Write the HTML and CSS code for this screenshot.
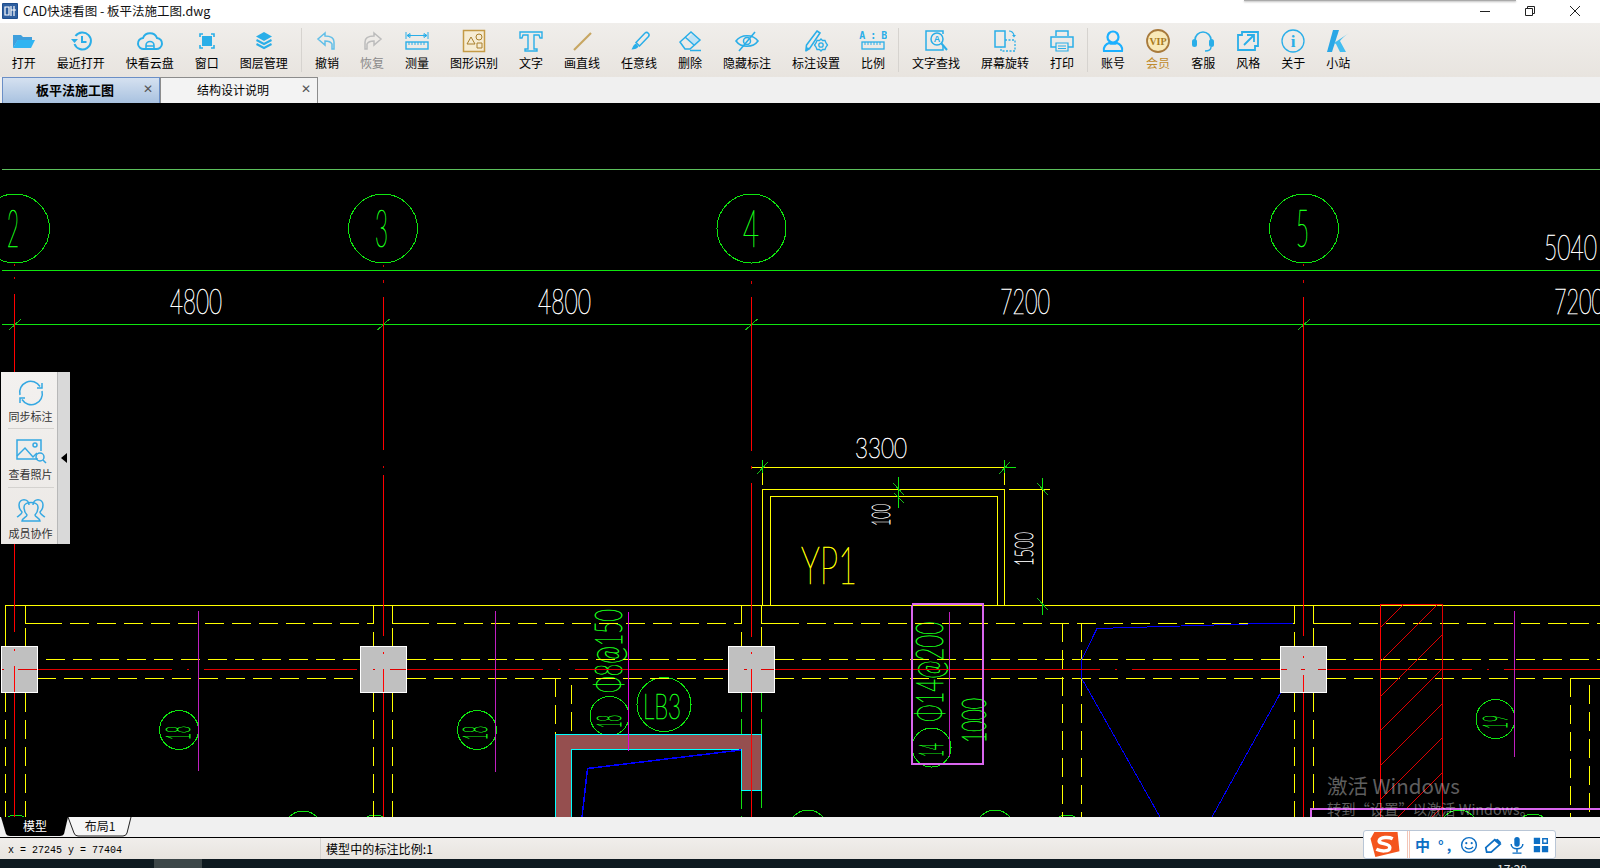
FILE: index.html
```html
<!DOCTYPE html>
<html lang="zh-CN">
<head>
<meta charset="utf-8">
<title>CAD快速看图 - 板平法施工图.dwg</title>
<link rel="stylesheet" href="styles.css">
</head>
<body>
<div class="app">
  <header class="titlebar">
    <svg class="app-icon" viewBox="0 0 16 16"><rect width="16" height="16" rx="1" fill="#1f4f8f"/><rect x="1" y="1" width="14" height="14" fill="#2f5f9f"/><path d="M3 4h4v8H3zM9 3v10M12 3v10M9 7h5" fill="none" stroke="#fff" stroke-width="1.2"/></svg>
    <span class="title">CAD快速看图 - 板平法施工图.dwg</span>
    <div class="win-shadow"></div>
    <div class="win-btns">
      <svg class="win-btn" viewBox="0 0 12 12"><path d="M1 6.500h10" stroke="#222" fill="none"/></svg>
      <svg class="win-btn" viewBox="0 0 12 12"><path d="M1.500 3.500h7v7h-7zM3.500 3.500v-2h7v7h-2" stroke="#222" fill="none"/></svg>
      <svg class="win-btn" viewBox="0 0 12 12"><path d="M1 1l10 10M11 1L1 11" stroke="#222" fill="none"/></svg>
    </div>
  </header>

  <nav class="toolbar">
    <div class="tool"><svg class="ico" viewBox="0 0 28 28"><path d="M3 21V8h8l2 2h9v3H8z" fill="#3f9fdc"/><path d="M7.500 13H25l-4 8H3z" fill="#2fb4f2"/></svg><span>打开</span></div>
    <div class="tool"><svg class="ico line" viewBox="0 0 28 28"><path d="M8.500 9a8.500 8.500 0 1 1-1 8" stroke-width="2"/><path d="M4 12h7l-3.500 4z" class="solid"/><path d="M15 9v6h4.500" stroke-width="2"/></svg><span>最近打开</span></div>
    <div class="tool"><svg class="ico line" viewBox="0 0 28 28"><path d="M8 22a5.500 5.500 0 0 1-1-11A7.500 7.500 0 0 1 21 11a5.500 5.500 0 0 1-1 11z" stroke-width="2"/><path d="M10 22v-3.500a4 4 0 0 1 8 0V22M10 19h8" stroke-width="1.600"/></svg><span>快看云盘</span></div>
    <div class="tool"><svg class="ico line" viewBox="0 0 28 28"><rect x="9" y="9" width="10" height="10" class="solid"/><path d="M7 10V7h3M18 7h3v3M21 18v3h-3M10 21H7v-3" stroke-width="1.600"/></svg><span>窗口</span></div>
    <div class="tool"><svg class="ico line" viewBox="0 0 28 28"><path d="M14 5l8 4.500-8 4.500-8-4.500z" class="solid"/><path d="M6.500 13l7.500 4 7.500-4M6.500 17l7.500 4 7.500-4" stroke-width="2"/></svg><span>图层管理</span></div>
    <div class="sep"></div>
    <div class="tool"><svg class="ico line pale" viewBox="0 0 28 28"><path d="M12 6l-7 6 7 6v-4c4 0 6 1 7 3v5h2v-7c0-4-4-6-9-6z" stroke-width="1.500"/></svg><span>撤销</span></div>
    <div class="tool"><svg class="ico line grey" viewBox="0 0 28 28"><path d="M16 6l7 6-7 6v-4c-4 0-6 1-7 3v5H7v-7c0-4 4-6 9-6z" stroke-width="1.500"/></svg><span class="off">恢复</span></div>
    <div class="tool"><svg class="ico line" viewBox="0 0 28 28"><path d="M3 5v7M25 5v7M4 8.500h20M4 8.500l3-2v4zM24 8.500l-3-2v4z" stroke-width="1"/><rect x="3" y="15" width="22" height="7" stroke-width="1.400"/><path d="M6 15v3M9 15v3M12 15v3M15 15v3M18 15v3M21 15v3" stroke-width="1"/></svg><span>测量</span></div>
    <div class="tool"><svg class="ico gold" viewBox="0 0 28 28"><rect x="3.500" y="3.500" width="21" height="21" fill="#f6ecd3" stroke="#c49a46" stroke-width="1.500"/><path d="M11 10l4 7H7zM17 16h5v5h-5z" fill="none" stroke="#a87f2c"/><circle cx="19" cy="10" r="3" fill="none" stroke="#a87f2c"/></svg><span>图形识别</span></div>
    <div class="tool"><svg class="ico line" viewBox="0 0 28 28"><path d="M3 5h22v6h-2l-1-3h-5v14h3v2H8v-2h3V8H6l-1 3H3z" stroke-width="1.400"/></svg><span>文字</span></div>
    <div class="tool"><svg class="ico" viewBox="0 0 28 28"><path d="M6 23L23 6" stroke="#c7a662" stroke-width="2.200"/></svg><span>画直线</span></div>
    <div class="tool"><svg class="ico line" viewBox="0 0 28 28"><path d="M20 6a2.500 2.500 0 0 1 3.500 3.500L14.500 19 11 15.500z" stroke-width="1.500"/><path d="M11 16.500c-2.500 1-3 3-4.500 6 3.500 0 6-1 7-3z" class="solid"/></svg><span>任意线</span></div>
    <div class="tool"><svg class="ico line" viewBox="0 0 28 28"><path d="M16 7l8 7-5 5-8-7z" class="solid tint"/><path d="M4 15L15 5l9 8-10 9H9z" stroke-width="1.500"/><path d="M9 10l9 8M14 23.500h11" stroke-width="1.500"/></svg><span>删除</span></div>
    <div class="tool"><svg class="ico line" viewBox="0 0 28 28"><path d="M3 14c5-7 17-7 22 0-5 7-17 7-22 0z" stroke-width="1.600"/><circle cx="14" cy="14" r="3.500" stroke-width="1.500"/><path d="M6 24L22 5" stroke-width="1.600"/></svg><span>隐藏标注</span></div>
    <div class="tool"><svg class="ico line" viewBox="0 0 28 28"><path d="M15 4l3 2-10 15-4 2 .5-5z" stroke-width="1.600"/><path d="M3.500 25l1-5 4 2z" class="solid"/><circle cx="19" cy="18" r="2.200" stroke-width="1.300"/><path d="M19 12l1.500 1.500h2.500l1 2.500L25.500 18 24 20l-1 2.500h-2.500L19 24l-1.500-1.500H15L14 20l-1.500-2 1.500-2 1-2.500h2.500z" stroke-width="1.300"/></svg><span>标注设置</span></div>
    <div class="tool"><svg class="ico line" viewBox="0 0 28 28"><text x="14" y="12" class="ab">A : B</text><rect x="3" y="15" width="22" height="7" stroke-width="1.300"/><path d="M6 15v3M9 15v3M12 15v3M15 15v3M18 15v3M21 15v3" stroke-width="1"/></svg><span>比例</span></div>
    <div class="sep"></div>
    <div class="tool"><svg class="ico line" viewBox="0 0 28 28"><path d="M21 18v5H4V4h17v3" stroke-width="1.500"/><circle cx="15" cy="12" r="6" stroke-width="1.500"/><path d="M19.500 16.500L25 23" stroke-width="2"/><text x="15" y="15" class="lens">A</text></svg><span>文字查找</span></div>
    <div class="tool"><svg class="ico line" viewBox="0 0 28 28"><rect x="4" y="4" width="10" height="16" stroke-width="1.500"/><path d="M14 13h10v11H10v-4" stroke-width="1.300" stroke-dasharray="2 1.500"/><path d="M18 4c2 0 4 1 5 4" stroke-width="1.200"/><path d="M21 8h4l-2 2.500z" class="solid"/></svg><span>屏幕旋转</span></div>
    <div class="tool"><svg class="ico line" viewBox="0 0 28 28"><path d="M8 9V4h12v5M8 20H3V10h22v10h-5" stroke-width="1.500"/><path d="M8 16h12v8H8zM10 19h8M10 21.500h8" stroke-width="1.200"/></svg><span>打印</span></div>
    <div class="sep"></div>
    <div class="tool"><svg class="ico line bright" viewBox="0 0 28 28"><circle cx="14" cy="10" r="5.500" stroke-width="2.200"/><path d="M5 24c-1-4 2-7 5-8 2 1 6 1 8 0 3 1 6 4 5 8z" stroke-width="2.200"/></svg><span>账号</span></div>
    <div class="tool"><svg class="ico" viewBox="0 0 28 28"><circle cx="14" cy="14" r="11" fill="#f9e9b8" stroke="#a87a3c" stroke-width="1.800"/><text x="14" y="17.500" class="vip">VIP</text></svg><span class="gold-label">会员</span></div>
    <div class="tool"><svg class="ico line" viewBox="0 0 28 28"><path d="M6 13a8 8 0 0 1 16 0" stroke-width="1.600"/><rect x="3" y="12" width="5" height="8" rx="2.500" class="solid"/><rect x="20" y="12" width="5" height="8" rx="2.500" class="solid"/><path d="M22 20c0 3-3 4-6 4" stroke-width="1.400"/></svg><span>客服</span></div>
    <div class="tool"><svg class="ico line" viewBox="0 0 28 28"><path d="M24 5v14h-3v4H4V8h4V5z" stroke-width="1.800"/><path d="M10 18L20 8M13 8h7v7" stroke-width="1.800"/></svg><span>风格</span></div>
    <div class="tool"><svg class="ico line" viewBox="0 0 28 28"><circle cx="14" cy="14" r="11" stroke-width="1.300"/><text x="14" y="20" class="info">i</text></svg><span>关于</span></div>
    <div class="tool"><svg class="ico" viewBox="0 0 28 28"><path d="M9 3h6L8 25H3z" fill="#2aa7e6"/><path d="M10 16L25 6c-4 3-7 5-9 8l6 11h-6l-4-8z" fill="#43bdf0"/></svg><span>小站</span></div>
  </nav>

  <div class="tabs">
    <div class="tab tab-on"><span class="tab-text">板平法施工图</span><span class="tab-x">✕</span></div>
    <div class="tab"><span class="tab-text">结构设计说明</span><span class="tab-x">✕</span></div>
  </div>

  <main class="canvas">
    <svg class="drawing" viewBox="0 103 1600 714" width="1600" height="714">
      <defs><clipPath id="hatch"><rect x="1380" y="604" width="63" height="213"/></clipPath></defs>

      <path class="gf" d="M2 169.500H1600"/>
      <path class="gb" d="M2 270.500H1600M2 324.500H1600"/>
      <path class="gt" d="M9 330L21 319M377.500 330L389.500 319M745.500 330L757.500 319M1298 330L1310 319"/>

      <g class="gc">
        <circle cx="15" cy="228.500" r="34.500"/><circle cx="383" cy="228.500" r="34.500"/>
        <circle cx="751.500" cy="228.500" r="34.500"/><circle cx="1304" cy="228.500" r="34.500"/>
        <circle cx="179" cy="730" r="19.500"/><circle cx="477" cy="730" r="19.500"/>
        <circle cx="664" cy="704.500" r="27"/><circle cx="609.500" cy="716" r="19.500"/>
        <circle cx="931.500" cy="747.500" r="19.500"/><circle cx="1495.500" cy="719" r="19.500"/>
        <circle cx="303" cy="830" r="19"/><circle cx="16" cy="834" r="19"/><circle cx="375" cy="834" r="19"/>
        <circle cx="808" cy="829" r="19"/><circle cx="995" cy="829" r="19"/><circle cx="1459" cy="829" r="19"/>
        <circle cx="1533" cy="833" r="19"/><circle cx="1067" cy="834" r="19"/>
      </g>

      <g class="cad-w">
        <text x="170" y="314" font-size="35" textLength="52" lengthAdjust="spacingAndGlyphs">4800</text>
        <text x="538" y="314" font-size="35" textLength="53" lengthAdjust="spacingAndGlyphs">4800</text>
        <text x="1000" y="314" font-size="35" textLength="50" lengthAdjust="spacingAndGlyphs">7200</text>
        <text x="1554" y="314" font-size="35" textLength="50" lengthAdjust="spacingAndGlyphs">7200</text>
        <text x="1544" y="260" font-size="35" textLength="53" lengthAdjust="spacingAndGlyphs">5040</text>
        <text x="855" y="458" font-size="28" textLength="52" lengthAdjust="spacingAndGlyphs">3300</text>
        <text transform="translate(890,526) rotate(-90)" font-size="26" textLength="22" lengthAdjust="spacingAndGlyphs">100</text>
        <text transform="translate(1033,566) rotate(-90)" font-size="26" textLength="34" lengthAdjust="spacingAndGlyphs">1500</text>
      </g>
      <g class="cad-g">
        <text x="7" y="247" font-size="52" textLength="12" lengthAdjust="spacingAndGlyphs">2</text>
        <text x="375" y="247" font-size="52" textLength="13" lengthAdjust="spacingAndGlyphs">3</text>
        <text x="743" y="247" font-size="52" textLength="16" lengthAdjust="spacingAndGlyphs">4</text>
        <text x="1296" y="247" font-size="52" textLength="13" lengthAdjust="spacingAndGlyphs">5</text>
        <text x="643" y="719" font-size="35" textLength="38" lengthAdjust="spacingAndGlyphs">LB3</text>
        <text transform="translate(622,693) rotate(-90)" font-size="37" textLength="84" lengthAdjust="spacingAndGlyphs">Φ8@150</text>
        <text transform="translate(943,722) rotate(-90)" font-size="37" textLength="100" lengthAdjust="spacingAndGlyphs">Φ14@200</text>
        <text transform="translate(986,743) rotate(-90)" font-size="34" textLength="45" lengthAdjust="spacingAndGlyphs">1000</text>
        <text transform="translate(621,728) rotate(-90)" font-size="33" textLength="13" lengthAdjust="spacingAndGlyphs">18</text>
        <text transform="translate(943,757) rotate(-90)" font-size="33" textLength="14" lengthAdjust="spacingAndGlyphs">14</text>
        <text transform="translate(190,740) rotate(-90)" font-size="33" textLength="14" lengthAdjust="spacingAndGlyphs">18</text>
        <text transform="translate(487,740) rotate(-90)" font-size="33" textLength="14" lengthAdjust="spacingAndGlyphs">18</text>
        <text transform="translate(1507,729) rotate(-90)" font-size="33" textLength="14" lengthAdjust="spacingAndGlyphs">19</text>
      </g>
      <text class="cad-y" x="801" y="584" font-size="52" textLength="56" lengthAdjust="spacingAndGlyphs">YP1</text>

      <path class="ys" d="M5.500 605H1600M5.500 605V646M25.500 605V623.500H43M392.500 605V623.500H410M761.500 605V623.500H780M1313.500 605V623.500H1332M25.500 628V646M392.500 628V646M761.500 627V646M1313.500 628V646M1570.500 678.500H1600"/>
      <path class="ys" d="M762.500 605V489.500H1004.500V605M770.500 605V496.500H997.500V605M762.500 460V485M1004.500 460V485M751 467.500H1004M1009 489.500H1050M1042.500 489V604"/>
      <path class="yd" d="M43 623.500H373M410 623.500H741M780 623.500H1294M1332 623.500H1570M1570 623.500H1600"/>
      <path class="yd" d="M46 659.500H360M407 659.500H728M775 659.500H1280M1327 659.500H1600M37 678.500H360M407 678.500H728M775 678.500H1280M1327 678.500H1570"/>
      <path class="yd" d="M5.500 693V817M25.500 693V817M373.500 605V646M373.500 693V817M392.500 693V817M741.500 605V646M1294.500 605V646M1294.500 693V817M1313.500 693V808M1062.500 623V817M1081.500 623V817M1570.500 678V817M1589.500 685V817M555.500 678V734M571.500 685V734"/>
      <path class="gd" d="M741.500 693V734M741.500 790V817M761.500 693V712M761.500 719V734M761.500 790V808"/>
      <path class="gb" d="M1004.500 467.500H1016M898.500 477V508M1042.500 478V489M1042.500 604V615M762.500 460V473M1004.500 460V473"/>
      <path class="gt" d="M757 474L768 462M999 474L1010 462M893 483L904 495M894 493L904 503M1037 483L1048 495M1037 598L1048 610"/>

      <path class="wall" d="M555.500 817V734.500H761.500V790.500H741.500V749.500H571.500V817z"/>
      <path class="blue" d="M582 817L587.500 768.500L741 750"/>
      <path class="blue-thin" d="M1294 623L1265 623.500L1097 628.500L1081.500 660V678L1160 817M1281 692L1212 817"/>

      <path class="r1" d="M14.500 294V372M14.500 544V632M14.500 666V817M383.500 297V450M383.500 475V636M383.500 669V817M751.500 297V451M751.500 483V637M751.500 669V817M1303.500 297V636M1303.500 669V817"/>
      <path class="r2" d="M14.500 277v2M14.500 264v2M383.500 265v2M383.500 280v3M751.500 281v3M1303.500 264v2M1303.500 280v3M383.500 466v2M751.500 466v3"/>
      <path class="r2" d="M37 669.500H172M187 669.500h2M204 669.500H357M407 669.500H543M558 669.500h2M575 669.500H728M775 669.500H1100M1115 669.500h2M1132 669.500H1281M1327 669.500H1472M1487 669.500h2M1504 669.500H1600"/>

      <g class="col">
        <rect x="1.500" y="646.500" width="36" height="46"/>
        <rect x="360.500" y="646.500" width="46" height="46"/>
        <rect x="728.500" y="646.500" width="46" height="46"/>
        <rect x="1280.500" y="646.500" width="46" height="46"/>
      </g>
      <path class="r1" d="M14.500 649v2M14.500 666V692M383.500 652v2M383.500 669V692M751.500 652v2M751.500 669V692M1303.500 656v2M1303.500 675V692"/>
      <path class="r2" d="M2 669.500h2M18 669.500H37M373 669.500h2M390 669.500H406M744 669.500h3M761 669.500H774M1281 669.500h6M1301 669.500h4M1318 669.500H1326"/>

      <path class="r1" d="M1380.500 604V817"/>
      <path class="r2" d="M1380.500 604.500H1442.500V817"/>
      <g clip-path="url(#hatch)"><path class="r2" d="M1404 604L1380 628M1438 604L1380 662M1442 635L1380 697M1442 669L1380 731M1442 704L1380 766M1442 738L1380 800M1442 773L1386 829M1442 807L1420 829"/></g>

      <path class="mg" d="M198.500 611V771M495.500 611V772M949.500 612V757M1514.500 611V757"/>
      <path class="mg2" d="M628.500 612V751"/>
      <path class="pink" d="M911.500 605V763.500H983V737M911.500 604H982.500V737"/>
      <path class="pink2" d="M1311 808.500H1600M1311 808V817"/>
    </svg>

    <aside class="side">
      <div class="side-items">
        <div class="side-item"><svg class="side-ico" viewBox="0 0 28 28"><path d="M3 16A11 11 0 0 1 23 7.500M25 12A11 11 0 0 1 5 20.500" /><path d="M25 4v5h-5M3 24v-5h5"/></svg><span>同步标注</span></div>
        <div class="side-rule"></div>
        <div class="side-item"><svg class="side-ico" viewBox="0 0 32 28"><path d="M23 22H2V3h24v11"/><path d="M2 19l8-8 8 9 4-4"/><circle cx="20" cy="8" r="2"/><circle cx="25" cy="20" r="4"/><path d="M28 23l3 3"/></svg><span>查看照片</span></div>
        <div class="side-rule"></div>
        <div class="side-item"><svg class="side-ico" viewBox="0 0 32 28"><path d="M2 21c3-2 5-3 5-5-2-2-3-5-3-7 0-7 10-7 10 0"/><path d="M30 21c-3-2-5-3-5-5 2-2 3-5 3-7 0-7-10-7-10 0"/><path d="M7 25c0-3 5-4 5-6-2-2-3-5-3-8 0-6 14-6 14 0 0 3-1 6-3 8 0 2 5 3 5 6z"/></svg><span>成员协作</span></div>
      </div>
      <div class="side-strip"><i class="side-arrow"></i></div>
    </aside>

    <div class="activate">
      <div class="act-1">激活 Windows</div>
      <div class="act-2">转到“设置”以激活 Windows。</div>
    </div>
  </main>

  <div class="layouts">
    <svg class="layout-tabs" viewBox="0 0 135 20" width="135" height="20">
      <path d="M68 0l6 16q1 3 4 3h45q3 0 4-3l4-16" fill="#f6f6f6" stroke="#222"/>
      <path d="M1 0l5 17q1 2 4 2h50q3 0 4-2l4-17z" fill="#000"/>
      <text x="35" y="14" class="lt-on">模型</text>
      <text x="100" y="14" class="lt">布局1</text>
    </svg>
  </div>

  <footer class="status">
    <span class="coords">x = 27245 y = 77404</span>
    <span class="scale">模型中的标注比例:1</span>
  </footer>

  <div class="taskbar"><i class="task-on"></i><span class="clock">17:28</span></div>

  <div class="ime">
    <svg class="ime-logo" viewBox="0 0 32 28"><path d="M5 1h24l2 20-25 6-5-19z" fill="#f4551e"/><path d="M24 8c-4-2-13-2-14 2s11 2 11 7-10 4-14 2" fill="none" stroke="#fff" stroke-width="3.600"/></svg>
    <span class="ime-div"></span>
    <span class="ime-zh">中</span>
    <span class="ime-punc">°,</span>
    <svg class="ime-ico" viewBox="0 0 20 20"><circle cx="10" cy="10" r="8.200" fill="none" stroke="#0d6fc4" stroke-width="1.600"/><circle cx="7" cy="8" r="1.200" fill="#0d6fc4"/><circle cx="13" cy="8" r="1.200" fill="#0d6fc4"/><path d="M5.500 12c2 3 7 3 9 0" fill="none" stroke="#0d6fc4" stroke-width="1.400"/></svg>
    <svg class="ime-ico" viewBox="0 0 20 20"><path d="M2 13L12 4l6 5-10 9H3z" fill="none" stroke="#0d6fc4" stroke-width="2"/><path d="M11 5l6 5 2-3-4-4z" fill="#0d6fc4"/></svg>
    <svg class="ime-ico" viewBox="0 0 20 20"><rect x="7" y="1" width="6" height="11" rx="3" fill="#0d6fc4"/><path d="M3.500 9c0 7 13 7 13 0M10 15v3M5 19h10" fill="none" stroke="#0d6fc4" stroke-width="1.600"/></svg>
    <svg class="ime-ico" viewBox="0 0 20 20"><path d="M2 2h7v7H2zM2 11h7v7H2zM11 11h7v7h-7z" fill="#0d6fc4"/><path d="M12 3h5v5h-5z" fill="none" stroke="#0d6fc4" stroke-width="1.600"/></svg>
  </div>
</div>
</body>
</html>
```

FILE: styles.css
```css
* { box-sizing: border-box; }
html, body { margin: 0; padding: 0; background: #000; }
body { width: 1600px; height: 868px; overflow: hidden; font-family: "Noto Sans CJK SC", "Liberation Sans", sans-serif; font-size: 12px; color: #000; }
.app { position: relative; display: flex; flex-direction: column; width: 1600px; height: 868px; }

.titlebar { position: relative; display: flex; align-items: center; height: 23px; flex: none; background: #fff; padding-left: 2px; padding-bottom: 2px; }
.app-icon { width: 16px; height: 16px; margin-right: 5px; }
.title { font-size: 12.500px; line-height: 21px; color: #111; }
.win-shadow { position: absolute; left: 1244px; top: 0; width: 272px; height: 1px; background: #aaa; box-shadow: 0 1px 2px rgba(0,0,0,.35); }
.win-btns { margin-left: auto; display: flex; gap: 33px; padding-right: 19px; }
.win-btn { width: 12px; height: 12px; }

.toolbar { display: flex; flex: none; height: 54px; background: linear-gradient(#f0eeeb, #e8e4df); padding-left: 1.300px; }
.tool { display: flex; flex-direction: column; align-items: center; padding: 0 10.500px; flex: none; }
.tool span { line-height: 16px; white-space: nowrap; }
.tool .off { color: #8a8a8a; }
.tool .gold-label { color: #c08a2c; }
.ico { width: 28px; height: 28px; margin: 4px -4px 0; flex: none; }
.line { fill: none; stroke: #2aaee8; }
.line .solid { fill: #2aaee8; stroke: none; }
.line .tint { fill: #bfe3f6; }
.pale { stroke: #62bfe8; }
.grey { stroke: #bcbcbc; }
.bright { stroke: #1cb0ff; }
.ab { font: bold 10px "DejaVu Sans Mono", monospace; fill: #2aaee8; stroke: none; text-anchor: middle; letter-spacing: -0.5px; }
.lens { font: bold 9px "Liberation Sans", sans-serif; fill: #2aaee8; stroke: none; text-anchor: middle; }
.vip { font: bold 10px "Liberation Serif", serif; fill: #a87a1c; text-anchor: middle; }
.info { font: bold 17px "Liberation Serif", serif; fill: #2aaee8; stroke: none; text-anchor: middle; }
.sep { width: 1px; margin: 5px 2.500px; background: #d6d3cf; flex: none; }

.tabs { display: flex; flex: none; height: 26px; background: #f0f0f0; padding-left: 2px; }
.tab { position: relative; width: 158px; height: 26px; border: 1px solid #8c8c8c; border-bottom: 0; display: flex; align-items: center; justify-content: center; background: #f3f3f3; padding-bottom: 2px; }
.tab-on { width: 158px; border-color: #6b8fc6; background: linear-gradient(#d5e1f0, #a9c2e0); }
.tab-text { padding-right: 12px; line-height: 22px; }
.tab-on .tab-text { font-weight: 700; font-size: 13px; }
.tab-x { position: absolute; right: 6px; top: 3px; font-size: 12px; line-height: 16px; color: #555; font-family: "DejaVu Sans", sans-serif; }

.canvas { position: relative; flex: none; height: 714px; background: #000; overflow: hidden; }
.drawing { display: block; shape-rendering: crispEdges; fill: none; }
.drawing text { shape-rendering: auto; font-family: "Lato", "Liberation Sans", sans-serif; font-weight: 100; stroke-width: 0.7px; }
.cad-w text { fill: #fff; stroke: #fff; }
.cad-g text { fill: #19ff19; stroke: #19ff19; }
.drawing .cad-y { fill: #ffff00; stroke: #ffff00; }
.gf { stroke: #5cc05c; stroke-width: 1; }
.gb { stroke: #0fe60f; stroke-width: 1; }
.gt { stroke: #16c016; stroke-width: 1; }
.gc circle { fill: none; stroke: #0fe60f; stroke-width: 1; }
.ys { stroke: #ffff00; stroke-width: 1; fill: none; }
.yd { stroke: #ffff00; stroke-width: 1; stroke-dasharray: 19 8; fill: none; }
.gd { stroke: #10e010; stroke-width: 1; stroke-dasharray: 19 7; fill: none; }
.wall { fill: #954f4f; stroke: #00ffff; stroke-width: 1; }
.blue { stroke: #0000ff; stroke-width: 1.500; fill: none; }
.blue-thin { stroke: #0000ff; stroke-width: 1; fill: none; }
.r1 { stroke: #f00; stroke-width: 1.500; fill: none; }
.r2 { stroke: #e00000; stroke-width: 1; fill: none; }
.col rect { fill: #c0c0c0; stroke: #fff; stroke-width: 1; }
.mg { stroke: #c020c0; stroke-width: 1; fill: none; }
.mg2 { stroke: #e000e0; stroke-width: 1.500; fill: none; }
.pink { stroke: #d966ee; stroke-width: 2; fill: none; }
.pink2 { stroke: #d966ee; stroke-width: 2; fill: none; }

.side { position: absolute; left: 1px; top: 269px; width: 69px; height: 172px; display: flex; }
.side-items { width: 57px; padding: 0 1px 0 4px; background: linear-gradient(#f3f1ef, #ebe8e5); border-right: 1px solid #b8b8b8; display: flex; flex-direction: column; align-items: center; }
.side-item { width: 51px; height: 56px; display: flex; flex-direction: column; align-items: center; padding-top: 7px; color: #333; }
.side-item span { font-size: 11px; line-height: 16px; white-space: nowrap; margin-top: 1px; }
.side-ico { height: 28px; width: 32px; fill: none; stroke: #35a8e2; stroke-width: 1.500; flex: none; }
.side-rule { width: 46px; height: 1px; background: #d4d2cf; flex: none; margin: 1px 0; }
.side-strip { width: 12px; background: #d9d9d9; display: flex; align-items: center; justify-content: center; }
.side-arrow { display: block; width: 0; height: 0; border: 5px solid transparent; border-left: 0; border-right: 6px solid #000; }

.activate { position: absolute; left: 1327px; top: 668px; color: rgba(255,255,255,.38); white-space: nowrap; }
.act-1 { font-size: 20.500px; line-height: 28px; font-family: "Noto Sans CJK SC", sans-serif; }
.act-2 { font-size: 14.300px; line-height: 20px; font-family: "Noto Sans CJK SC", sans-serif; }

.layouts { flex: none; height: 21px; background: #f0f0f0; border-bottom: 1px solid #000; }
.layout-tabs { display: block; }
.lt, .lt-on { font-size: 12px; text-anchor: middle; font-family: "Noto Sans CJK SC", sans-serif; }
.lt { fill: #111; }
.lt-on { fill: #fff; }

.status { flex: none; height: 21px; display: flex; align-items: center; background: linear-gradient(#f0eeeb, #e8e4df); }
.coords { width: 321px; height: 21px; padding: 2px 0 0 8px; font: 10px/21px "Liberation Mono", monospace; border-right: 1px solid #d4d2cf; }
.scale { padding-left: 5px; font-size: 12px; line-height: 21px; letter-spacing: 0.1px; }

.taskbar { position: relative; flex: 1; background: #0e1a20; overflow: hidden; }
.task-on { position: absolute; left: 154px; top: 0; width: 48px; height: 9px; background: #3c4648; }
.clock { position: absolute; left: 1497px; top: 3px; font-size: 12px; line-height: 14px; color: #e8e8e8; }

.ime { position: absolute; left: 1363px; top: 830px; width: 193px; height: 29px; display: flex; align-items: center; background: #fff; border: 1px solid #b9c6d6; border-radius: 3px; padding-left: 5px; }
.ime-logo { width: 32px; height: 27px; flex: none; }
.ime-div { width: 3px; height: 27px; margin: 0 5px 0 6px; border-left: 1px solid #f3c6b8; border-right: 1px solid #f3c6b8; flex: none; }
.ime-zh { font-size: 15px; font-weight: 700; color: #0d6fc4; width: 20px; margin-right: 8px; line-height: 27px; }
.ime-punc { font-size: 14px; font-weight: 700; color: #0d6fc4; width: 18px; margin-right: 6px; line-height: 22px; letter-spacing: 3px; }
.ime-ico { width: 18px; height: 18px; margin-right: 6px; flex: none; }
```
